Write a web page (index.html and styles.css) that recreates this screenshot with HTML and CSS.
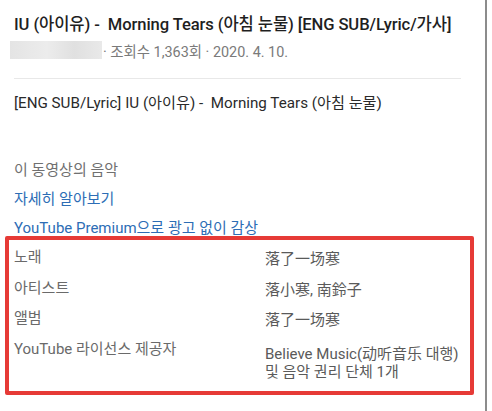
FILE: index.html
```html
<!DOCTYPE html>
<html lang="ko">
<head>
<meta charset="utf-8">
<link rel="stylesheet" href="styles.css">
</head>
<body>
<div class="page">
  <div class="head">
    <h1 class="title">IU (아이유) -&nbsp; Morning Tears (아침 눈물) [ENG SUB/Lyric/가사]</h1>
    <div class="meta">
      <span class="blur"></span>
      <span class="meta-text">· 조회수 1,363회 · 2020. 4. 10.</span>
    </div>
  </div>
  <div class="divider"></div>
  <p class="desc">[ENG SUB/Lyric] IU (아이유) -&nbsp; Morning Tears (아침 눈물)</p>
  <div class="music">
    <div class="music-title">이 동영상의 음악</div>
    <a class="link">자세히 알아보기</a>
    <a class="link">YouTube Premium으로 광고 없이 감상</a>
  </div>
  <div class="box">
    <div class="row"><span class="label">노래</span><span class="value">落了一场寒</span></div>
    <div class="row"><span class="label">아티스트</span><span class="value">落小寒, 南鈴子</span></div>
    <div class="row"><span class="label">앨범</span><span class="value">落了一场寒</span></div>
    <div class="row"><span class="label">YouTube 라이선스 제공자</span><span class="value value-multi">Believe Music(动听音乐 대행)<br>및 음악 권리 단체 1개</span></div>
  </div>
</div>
</body>
</html>
```
FILE: styles.css
```css
html, body {
  margin: 0;
  padding: 0;
  background: #fff;
}
body {
  font-family: Roboto, "Noto Sans CJK KR", "Noto Sans", sans-serif;
  color: #333;
}
.page {
  width: 485px;
  height: 411px;
  border-right: 2px solid #8c8c8c;
  overflow: hidden;
}
.head {
  padding: 14px 14px 0 14px;
}
.title {
  margin: 0;
  font-size: 16.6px;
  font-weight: 500;
  line-height: 22px;
  color: #1f1f1f;
  white-space: nowrap;
  letter-spacing: -0.1px;
}
.meta {
  display: flex;
  align-items: center;
  margin-top: 4px;
  margin-left: -4px;
  height: 20px;
}
.blur {
  width: 92px;
  height: 18px;
  background: linear-gradient(90deg, #e4e4e4, #ececec 40%, #e0e0e0 70%, #e9e9e9);
}
.meta-text {
  margin-left: 1px;
  font-size: 14.4px;
  color: #7a7a7a;
}
.divider {
  height: 1px;
  background: #e8e8e8;
  margin: 18px 24px 0 14px;
}
.desc {
  margin: 14px 14px 0 14px;
  font-size: 15.2px;
  line-height: 20px;
  color: #2a2a2a;
  white-space: nowrap;
}
.music {
  display: flex;
  flex-direction: column;
  gap: 9px;
  padding: 0 14px;
  margin-top: 47px;
}
.music-title, .link {
  font-size: 15px;
  line-height: 20px;
  white-space: nowrap;
}
.music-title {
  color: #707070;
}
.link {
  color: #2d6db5;
}
.box {
  margin: -2px 0 0 5px;
  width: 456px;
  border: 4px solid #e63a36;
  border-radius: 2px;
  padding: 7px 0 10px 5px;
}
.row {
  display: grid;
  grid-template-columns: 251px 1fr;
  font-size: 15px;
  line-height: 20px;
  min-height: 30.5px;
}
.label {
  color: #6a6a6a;
  white-space: nowrap;
}
.value {
  color: #5a5a5a;
  padding-top: 2px;
  white-space: nowrap;
}
.value-multi {
  padding-top: 6px;
  line-height: 18px;
}
```
